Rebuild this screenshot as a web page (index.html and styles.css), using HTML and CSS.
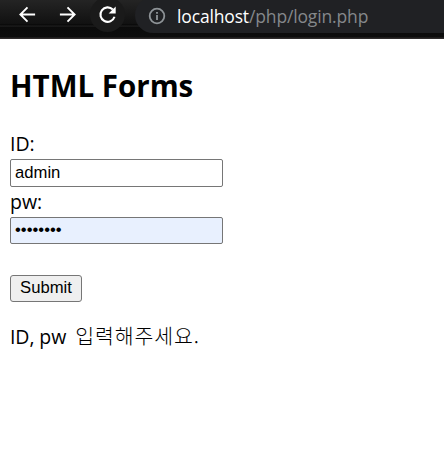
FILE: index.html
```html
<!DOCTYPE html>
<html lang="ko">
<head>
<meta charset="utf-8">
<title>HTML Forms</title>
<link rel="stylesheet" href="styles.css">
</head>
<body>
<header class="toolbar">
  <svg class="nav" viewBox="0 0 20 20"><path d="M18 10H3M10 2.5L2.5 10L10 17.5"/></svg>
  <svg class="nav forward" viewBox="0 0 20 20"><path d="M2 10H17M10 2.5L17.5 10L10 17.5"/></svg>
  <span class="reload"><svg class="nav" viewBox="0 0 20 20"><path d="M15.6 4.8A7.6 7.6 0 1 0 17.4 12.4"/><path class="tip" d="M18.6 1.6V9H11.2Z"/></svg></span>
  <div class="address">
    <svg class="info" viewBox="0 0 18 18"><circle cx="9" cy="9" r="7.3"/><path d="M9 8V13M9 4.9V6.7"/></svg>
    <span class="url"><span class="host">localhost</span>/php/login.php</span>
  </div>
</header>
<main>
  <h2>HTML Forms</h2>
  <form>
    <label for="id">ID:</label>
    <input id="id" type="text" value="admin">
    <label for="pw">pw:</label>
    <input id="pw" class="filled" type="password" value="password">
    <button type="button">Submit</button>
  </form>
  <p><span class="latin">ID, pw</span> <span class="korean">입력해주세요.</span></p>
</main>
</body>
</html>
```
FILE: styles.css
```css
* { box-sizing: border-box; }
body {
  margin: 0;
  height: 451px;
  overflow: hidden;
  background: #fff;
  color: #000;
  font-family: "Open Sans", "Noto Sans CJK KR", sans-serif;
}
.toolbar {
  display: flex;
  align-items: flex-start;
  height: 39px;
  padding-left: 18px;
  overflow: hidden;
  background: linear-gradient(#242424 0, #111 24px, #050505 25px, #242424 26px, #0b0b0b 27px, #0d0d0d 37px, #2e2b2b 38px);
}
.nav {
  flex: none;
  width: 19px;
  height: 19px;
  margin-top: 5px;
  fill: none;
  stroke: #fff;
  stroke-width: 2;
}
.forward { margin-left: 21px; }
.reload {
  flex: none;
  width: 35px;
  height: 35px;
  margin: -3px 0 0 13px;
  padding-left: 8px;
  border-radius: 50%;
  background: #1a1a1a;
}
.reload .nav { margin-top: 8px; }
.reload .nav path { stroke-width: 2.2; }
.reload .nav .tip { fill: #fff; stroke: none; }
.address {
  display: flex;
  flex: 1;
  align-items: flex-start;
  height: 36px;
  margin: -3px 0 0 10px;
  padding: 10px 0 0 13px;
  border-radius: 18px 0 0 18px;
  background: #202124;
}
.info {
  width: 18px;
  height: 18px;
  fill: none;
  stroke: #8e9397;
  stroke-width: 1.8;
}
.url {
  margin-left: 11px;
  color: #85888b;
  font: 17.5px/18px "Open Sans", sans-serif;
  letter-spacing: -0.15px;
  white-space: nowrap;
}
.host { color: #fff; }
main { padding: 30px 10px 0; }
h2 {
  margin: 0 0 29px;
  font-size: 29.5px;
  font-weight: 700;
  line-height: 34px;
}
form {
  display: flex;
  flex-direction: column;
  align-items: flex-start;
}
label {
  height: 27px;
  font-size: 19.5px;
  line-height: 24px;
}
label + input { margin-bottom: 3px; }
input {
  width: 213px;
  height: 28px;
  padding: 0 4px 1px;
  border: 1px solid #767676;
  border-radius: 2px;
  color: #000;
  font: 16.67px "Liberation Sans", sans-serif;
}
input.filled {
  height: 27px;
  background: #e8f0fe;
}
button {
  width: 72px;
  height: 27px;
  margin-top: 28px;
  padding: 0 0 2px;
  border: 1px solid #767676;
  border-radius: 3px;
  background: #efefef;
  color: #000;
  font: 16.67px "Liberation Sans", sans-serif;
}
p {
  margin: 19px 0 0;
  font-size: 19.5px;
  line-height: 28px;
  white-space: nowrap;
}
.latin { letter-spacing: -0.1px; }
.korean {
  margin-left: 4px;
  font-family: "Noto Sans CJK KR", sans-serif;
  font-size: 20.5px;
  font-weight: 300;
  letter-spacing: 0.9px;
}
```
